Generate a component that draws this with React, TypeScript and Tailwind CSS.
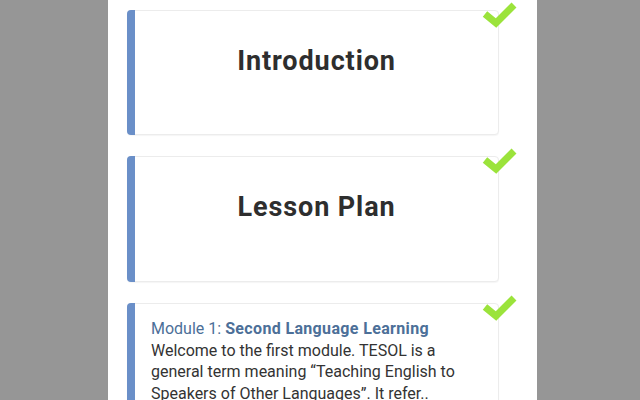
import React from "react";

function Check() {
  return (
    <svg
      className="absolute -top-[11px] -right-[20px]"
      width="36"
      height="30"
      viewBox="0 0 36 30"
    >
      <polyline
        points="3,14 14,23 32,5"
        fill="none"
        stroke="#9be33b"
        strokeWidth="7"
        strokeLinejoin="miter"
      />
    </svg>
  );
}

function Card({ children, className = "" }: { children: React.ReactNode; className?: string }) {
  return (
    <div className={"relative flex shrink-0 rounded-[4px] border border-[#ececec] bg-white shadow-[0_1px_1px_rgba(0,0,0,0.04)] " + className}>
      <div className="w-[8px] shrink-0 rounded-l-[4px] bg-[#6a8fc8] -my-px -ml-px" />
      <div className="flex-1">{children}</div>
      <Check />
    </div>
  );
}

export default function App() {
  return (
    <div
      className="h-[400px] w-[640px] overflow-hidden bg-[#969696]"
      style={{ fontFamily: "Roboto, 'Noto Sans', sans-serif" }}
    >
      <div className="ml-[108px] h-full w-[429px] bg-white pl-[19px] pr-[38px] pt-[10px] flex flex-col gap-[21px]">
        <Card className="h-[125px]">
          <div className="pt-[34px] text-center text-[27px] font-bold leading-[32px] tracking-[0.9px] text-[#2e2e2e]">
            Introduction
          </div>
        </Card>
        <Card className="h-[126px]">
          <div className="pt-[34px] text-center text-[27px] font-bold leading-[32px] tracking-[0.9px] text-[#2e2e2e]">
            Lesson Plan
          </div>
        </Card>
        <Card className="h-[140px]">
          <div className="pl-[16px] pr-[16px] pt-[14px] text-[16px] leading-[21.5px] text-[#333]">
            <div className="text-[#4c6f98]">
              Module 1: <span className="font-bold tracking-[0.35px]">Second Language Learning</span>
            </div>
            <div>
              Welcome to the first module. TESOL is a general term meaning “Teaching English to Speakers of Other Languages”. It refer..
            </div>
          </div>
        </Card>
      </div>
    </div>
  );
}
